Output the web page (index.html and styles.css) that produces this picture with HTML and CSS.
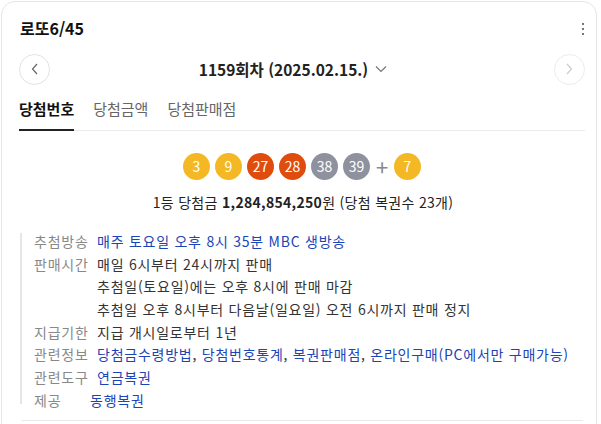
FILE: index.html
```html
<!DOCTYPE html>
<html lang="ko">
<head>
  <meta charset="UTF-8">
  <meta name="viewport" content="width=device-width, initial-scale=1.0">
  <title>로또6/45</title>
  <link rel="stylesheet" href="styles.css">
</head>
<body>
  <div class="lotto-card">
    <div class="card-head">
      <h2>로또6/45</h2>
      <span class="more-btn"><i></i><i></i><i></i></span>
    </div>

    <div class="round-nav">
      <span class="nav-btn">
        <svg width="10" height="12" viewBox="0 0 10 12"><path d="M7 1 L2.5 6 L7 11" fill="none" stroke="#666" stroke-width="1.2"/></svg>
      </span>
      <div class="round-title">1159회차 (2025.02.15.)
        <svg width="12" height="8" viewBox="0 0 12 8"><path d="M1 1.5 L6 6.5 L11 1.5" fill="none" stroke="#777" stroke-width="1.2"/></svg>
      </div>
      <span class="nav-btn disabled">
        <svg width="10" height="12" viewBox="0 0 10 12"><path d="M3 1 L7.5 6 L3 11" fill="none" stroke="#ccc" stroke-width="1.2"/></svg>
      </span>
    </div>

    <div class="tabs">
      <span class="tab active">당첨번호</span>
      <span class="tab">당첨금액</span>
      <span class="tab">당첨판매점</span>
    </div>

    <div class="balls">
      <span class="ball yellow">3</span>
      <span class="ball yellow">9</span>
      <span class="ball red">27</span>
      <span class="ball red">28</span>
      <span class="ball gray">38</span>
      <span class="ball gray">39</span>
      <span class="plus">+</span>
      <span class="ball yellow">7</span>
    </div>

    <p class="prize">1등 당첨금 <b>1,284,854,250</b>원 (당첨 복권수 23개)</p>

    <dl class="info">
      <div class="info-row"><dt>추첨방송</dt><dd><a href="#">매주 토요일 오후 8시 35분 MBC 생방송</a></dd></div>
      <div class="info-row"><dt>판매시간</dt><dd>매일 6시부터 24시까지 판매<br>추첨일(토요일)에는 오후 8시에 판매 마감<br>추첨일 오후 8시부터 다음날(일요일) 오전 6시까지 판매 정지</dd></div>
      <div class="info-row"><dt>지급기한</dt><dd>지급 개시일로부터 1년</dd></div>
      <div class="info-row"><dt>관련정보</dt><dd><a href="#">당첨금수령방법</a>, <a href="#">당첨번호통계</a>, <a href="#">복권판매점</a>, <a href="#">온라인구매(PC에서만 구매가능)</a></dd></div>
      <div class="info-row"><dt>관련도구</dt><dd><a href="#">연금복권</a></dd></div>
      <div class="info-row provider"><dt>제공</dt><dd><a href="#">동행복권</a></dd></div>
    </dl>

    <div class="card-foot"></div>
  </div>
</body>
</html>
```

FILE: styles.css
```css
body {
  margin: 0;
  padding: 1px 4px 0 1px;
  background: #fff;
  font-family: "Noto Sans CJK KR", "Noto Sans", sans-serif;
  color: #222;
  font-size: 14px;
}
.lotto-card {
  border: 1px solid #e6e6e6;
  border-radius: 14px;
  padding: 16px 11px 0 17px;
  height: 440px;
  box-sizing: border-box;
}
.card-head {
  display: flex;
  justify-content: space-between;
  align-items: center;
  height: 20px;
}
.card-head h2 {
  margin: 0;
  font-size: 16px;
  font-weight: bold;
  line-height: 20px;
  color: #111;
  padding-left: 1px;
}
.more-btn {
  display: flex;
  flex-direction: column;
  gap: 3px;
  margin-right: 1px;
  padding-top: 2px;
}
.more-btn i {
  display: block;
  width: 2px;
  height: 2px;
  background: #777;
}
.round-nav {
  display: flex;
  justify-content: space-between;
  align-items: center;
  height: 32px;
  margin-top: 15px;
}
.nav-btn {
  width: 29px;
  height: 29px;
  border: 1px solid #e2e2e2;
  border-radius: 50%;
  display: flex;
  align-items: center;
  justify-content: center;
}
.nav-btn.disabled {
  border-color: #ececec;
}
.round-title {
  font-size: 15.5px;
  font-weight: bold;
  color: #222;
  display: flex;
  align-items: center;
  gap: 7px;
  margin-left: -18px;
}
.tabs {
  display: flex;
  gap: 19px;
  margin-top: 8px;
  border-bottom: 1px solid #ebebeb;
}
.tab {
  font-size: 15px;
  line-height: 20px;
  padding: 6px 0 10px;
  color: #666;
  margin-bottom: -1px;
  border-bottom: 2px solid transparent;
}
.tab.active {
  color: #111;
  font-weight: bold;
  border-bottom-color: #222;
}
.balls {
  display: flex;
  justify-content: center;
  align-items: center;
  gap: 5px;
  margin-top: 22px;
  padding-left: 0;
}
.ball {
  width: 27px;
  height: 27px;
  border-radius: 50%;
  color: #fff;
  font-size: 14px;
  line-height: 27px;
  text-align: center;
}
.ball.yellow {
  background: #f3b823;
}
.ball.red {
  background: #df4c0e;
}
.ball.gray {
  background: #8e929e;
}
.plus {
  width: 14px;
  text-align: center;
  font-size: 22px;
  line-height: 27px;
  color: #888;
}
.prize {
  margin: 12px 0 0;
  text-align: center;
  line-height: 20px;
  color: #222;
  padding-left: 2px;
  letter-spacing: 0.3px;
}
.prize b {
  font-weight: bold;
}
.info {
  margin: 18px 0 0 1px;
  padding-left: 14px;
  background: linear-gradient(#e6e6e6, #e6e6e6) no-repeat 0 3px;
  background-size: 2px calc(100% - 10px);
  letter-spacing: 0.75px;
}
.info-row {
  display: flex;
  line-height: 22.67px;
}
.info-row dt {
  width: 63px;
  flex-shrink: 0;
  color: #888;
}
.info-row dd {
  margin: 0;
  color: #333;
}
.info-row.provider dt {
  width: 56px;
}
.info a {
  color: #1a44b8;
  text-decoration: none;
}
.card-foot {
  margin: 9px 2px 0 3px;
  border-top: 1px solid #e8e8e8;
}
```
